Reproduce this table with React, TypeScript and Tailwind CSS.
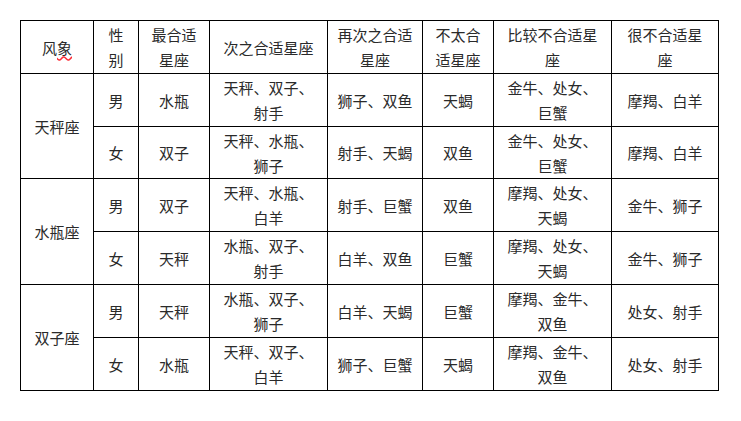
type Row = { sex: string; best: string; second: string[]; third: string; notQuite: string; worse: string[]; worst: string };

const groups: { sign: string; rows: Row[] }[] = [
  {
    sign: '天秤座',
    rows: [
      { sex: '男', best: '水瓶', second: ['天秤、双子、', '射手'], third: '狮子、双鱼', notQuite: '天蝎', worse: ['金牛、处女、', '巨蟹'], worst: '摩羯、白羊' },
      { sex: '女', best: '双子', second: ['天秤、水瓶、', '狮子'], third: '射手、天蝎', notQuite: '双鱼', worse: ['金牛、处女、', '巨蟹'], worst: '摩羯、白羊' },
    ],
  },
  {
    sign: '水瓶座',
    rows: [
      { sex: '男', best: '双子', second: ['天秤、水瓶、', '白羊'], third: '射手、巨蟹', notQuite: '双鱼', worse: ['摩羯、处女、', '天蝎'], worst: '金牛、狮子' },
      { sex: '女', best: '天秤', second: ['水瓶、双子、', '射手'], third: '白羊、双鱼', notQuite: '巨蟹', worse: ['摩羯、处女、', '天蝎'], worst: '金牛、狮子' },
    ],
  },
  {
    sign: '双子座',
    rows: [
      { sex: '男', best: '天秤', second: ['水瓶、双子、', '狮子'], third: '白羊、天蝎', notQuite: '巨蟹', worse: ['摩羯、金牛、', '双鱼'], worst: '处女、射手' },
      { sex: '女', best: '水瓶', second: ['天秤、双子、', '白羊'], third: '狮子、巨蟹', notQuite: '天蝎', worse: ['摩羯、金牛、', '双鱼'], worst: '处女、射手' },
    ],
  },
];

const cell = 'border border-black text-center align-middle p-0';

function Lines({ lines }: { lines: string[] }) {
  return (
    <>
      {lines.map((l, i) => (
        <div key={i}>{l}</div>
      ))}
    </>
  );
}

export default function App() {
  return (
    <div className="h-[421px] w-[741px] bg-white pl-[20px] pt-[20px]">
      <table
        className="w-[698px] table-fixed border-collapse text-[15px] leading-[25px] text-[#2a2a2a]"
        style={{ fontFamily: '"Noto Sans CJK SC", "Noto Sans", sans-serif' }}
      >
        <colgroup>
          <col className="w-[73px]" />
          <col className="w-[45px]" />
          <col className="w-[71px]" />
          <col className="w-[118px]" />
          <col className="w-[95px]" />
          <col className="w-[71px]" />
          <col className="w-[118px]" />
          <col className="w-[107px]" />
        </colgroup>
        <thead>
          <tr className="h-[53px]">
            <th className={`${cell} font-normal`}>
              风<span className="underline decoration-red-500 decoration-wavy underline-offset-2">象</span>
            </th>
            <th className={`${cell} font-normal`}><Lines lines={['性', '别']} /></th>
            <th className={`${cell} font-normal`}><Lines lines={['最合适', '星座']} /></th>
            <th className={`${cell} font-normal`}>次之合适星座</th>
            <th className={`${cell} font-normal`}><Lines lines={['再次之合适', '星座']} /></th>
            <th className={`${cell} font-normal`}><Lines lines={['不太合', '适星座']} /></th>
            <th className={`${cell} font-normal`}><Lines lines={['比较不合适星', '座']} /></th>
            <th className={`${cell} font-normal`}><Lines lines={['很不合适星', '座']} /></th>
          </tr>
        </thead>
        <tbody>
          {groups.map((g, gi) =>
            g.rows.map((r, i) => (
              <tr key={g.sign + i} className={gi === 0 && i === 1 ? 'h-[52px]' : 'h-[53px]'}>
                {i === 0 && (
                  <td rowSpan={2} className={cell}>
                    {g.sign}
                  </td>
                )}
                <td className={cell}>{r.sex}</td>
                <td className={cell}>{r.best}</td>
                <td className={cell}><Lines lines={r.second} /></td>
                <td className={cell}>{r.third}</td>
                <td className={cell}>{r.notQuite}</td>
                <td className={cell}><Lines lines={r.worse} /></td>
                <td className={cell}>{r.worst}</td>
              </tr>
            ))
          )}
        </tbody>
      </table>
    </div>
  );
}
